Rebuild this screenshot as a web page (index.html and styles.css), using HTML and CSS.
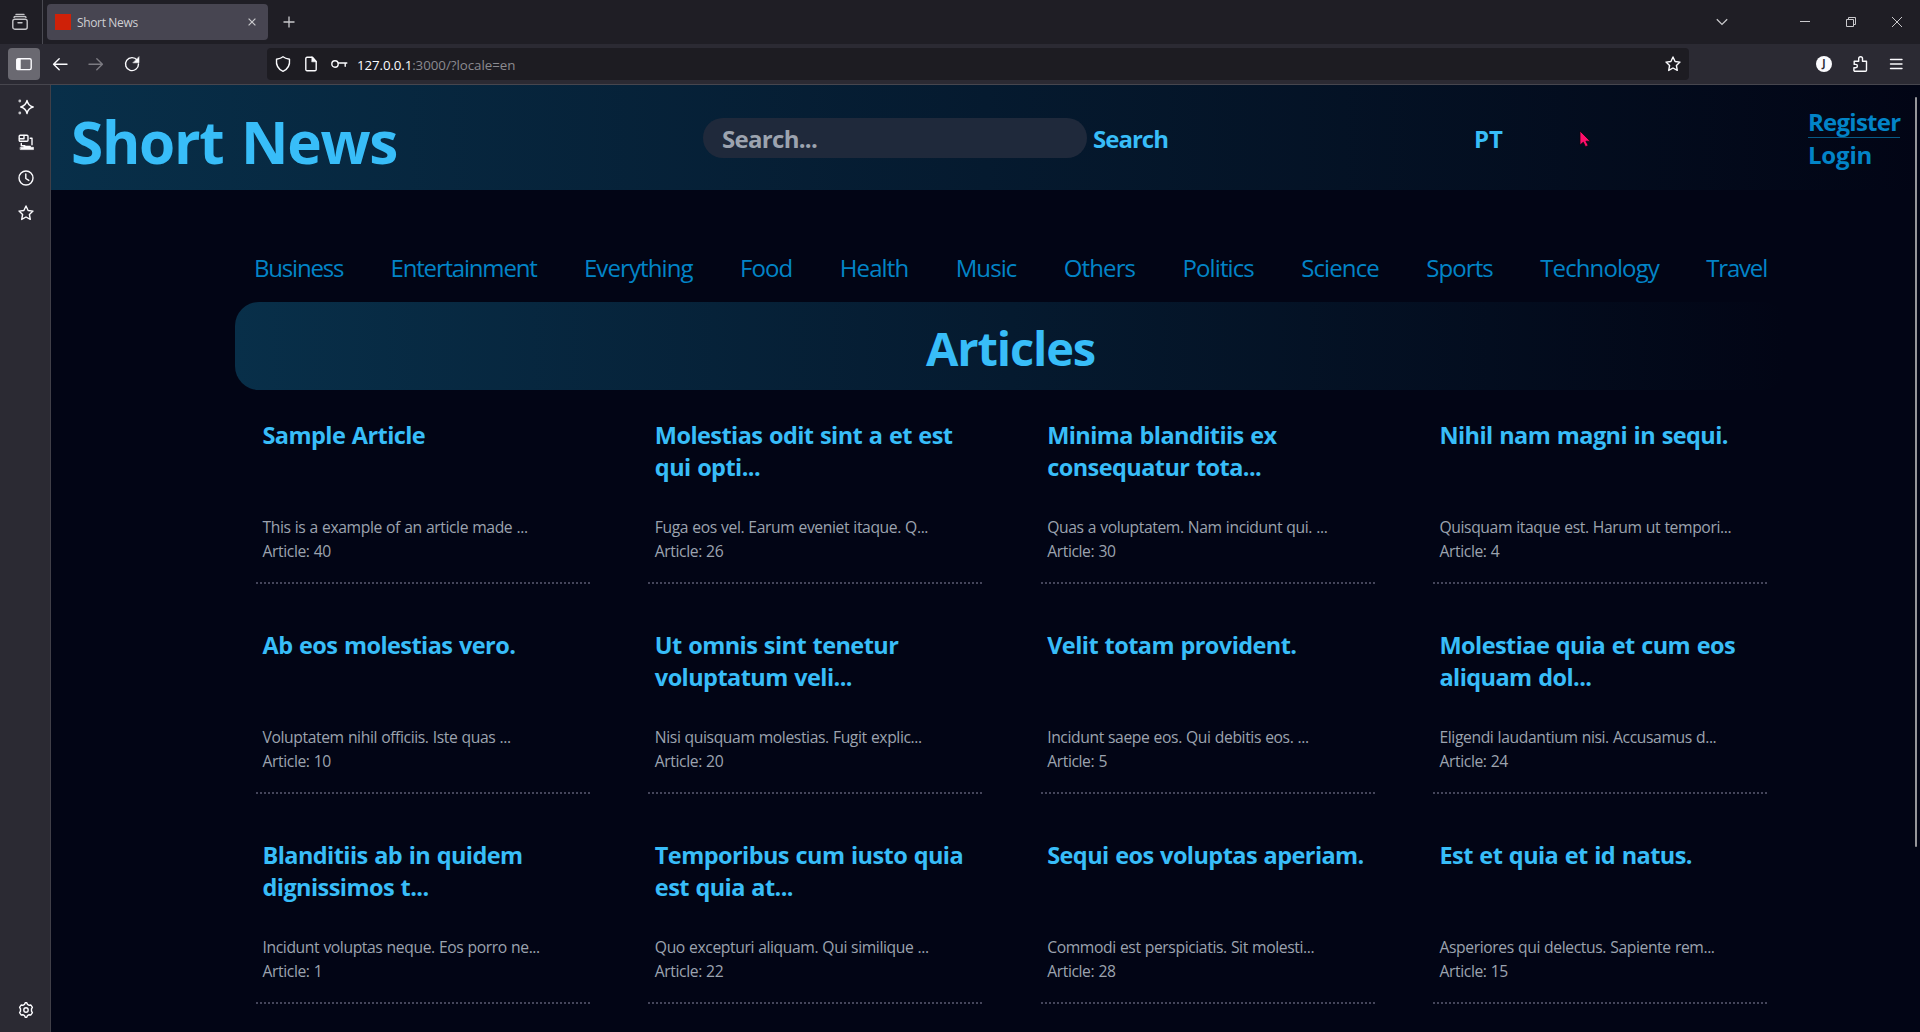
FILE: index.html
```html
<!DOCTYPE html>
<html lang="en">
<head>
<meta charset="utf-8">
<title>Short News</title>
<link rel="stylesheet" href="styles.css">
</head>
<body>
<div class="window">
  <div class="tabbar">
    <div class="view-button">
      <svg class="icon soft" viewBox="0 0 16 16"><rect x=".8" y="5.2" width="14.4" height="10" rx="2"/><path d="M2 3.4C2.3 2.7 3 2.5 3.5 2.5h9c.7 0 1.200.3 1.500.9M4 .4h8M6 8.700h4"/></svg>
    </div>
    <div class="tab">
      <span class="favicon"></span>
      <span class="tab-title">Short News</span>
      <svg class="icon-close" viewBox="0 0 8 8"><path d="M.6.6l6.800 6.800M7.400.6L.6 7.400"/></svg>
    </div>
    <svg class="icon-plus" viewBox="0 0 12 12"><path d="M6 .5v11M.5 6h11"/></svg>
    <div class="window-controls">
      <svg class="icon-chevron" viewBox="0 0 12 8"><path d="M.8 1.200L6 6.400l5.200-5.200"/></svg>
      <svg class="icon-caption" viewBox="0 0 10 10"><path d="M0 4.500h10"/></svg>
      <svg class="icon-caption" viewBox="0 0 10 10"><path d="M.5 2.500h7v7h-7zM2.500 2.500v-2h7v7h-2"/></svg>
      <svg class="icon-caption" viewBox="0 0 10 10"><path d="M0 0l10 10M10 0L0 10"/></svg>
    </div>
  </div>

  <div class="toolbar">
    <div class="sidebar-toggle">
      <svg class="icon" viewBox="0 0 16 16"><rect x=".8" y="2.800" width="14.400" height="10.800" rx="1.500"/><path class="solid" d="M1 3h3.400v10.500H1z"/></svg>
    </div>
    <div class="nav-buttons">
      <svg class="icon" viewBox="0 0 16 16"><path d="M15 8.300H2M7.200 2.800L1.600 8.300l5.600 5.500"/></svg>
      <svg class="icon dim" viewBox="0 0 16 16"><path d="M1 8.300h13M8.800 2.800l5.600 5.500-5.600 5.500"/></svg>
      <svg class="icon" viewBox="0 0 16 16"><path d="M13.200 4.200A6.500 6.500 0 1 0 14.500 8"/><path class="solid" d="M15 1v5.800H9.200z"/></svg>
    </div>
    <div class="urlbar">
      <svg class="icon" viewBox="0 0 16 16"><path d="M8 .8c2 1.600 4.300 2.100 6.500 2.500.5 5-1.600 10-6.500 12C3.100 13.300 1 8.300 1.500 3.300 3.700 2.900 6 2.400 8 .8z"/></svg>
      <svg class="icon" viewBox="0 0 16 16"><path d="M9.500 1.300H4A1.200 1.200 0 0 0 2.800 2.500v11A1.200 1.200 0 0 0 4 14.700h8a1.200 1.200 0 0 0 1.200-1.200V5.500z"/><path class="solid" d="M9 1l4.500 4.800H9z"/></svg>
      <svg class="icon" viewBox="0 0 16 16"><circle cx="4" cy="8" r="3.200"/><path d="M7.200 7h8.600M14.200 7v3.200"/></svg>
      <span class="url"><b>127.0.0.1</b>:3000/?locale=en</span>
      <svg class="icon bookmark" viewBox="0 0 16 16"><path d="M8 1l2.100 4.500 4.900.6-3.600 3.400.9 4.900L8 12l-4.300 2.400.9-4.900L1 6.100l4.900-.6z"/></svg>
    </div>
    <div class="toolbar-end">
      <span class="avatar">J</span>
      <svg class="icon" viewBox="0 0 16 16"><path d="M2.500 15.200h11a1 1 0 0 0 1-1V5.200h-4V2.600a1.900 1.900 0 0 0-3.800 0v2.600H2.200v3.200h1.500a1.700 1.700 0 0 1 0 3.400H1.900v2.700z"/></svg>
      <svg class="icon" viewBox="0 0 16 16"><path d="M2.500 3.500h11.500M2.500 8h11.500M2.500 12.500h11.500"/></svg>
    </div>
  </div>

  <div class="body">
    <aside class="sidebar">
      <svg class="icon" viewBox="0 0 16 16"><path d="M9 1.500C9.800 5.400 11.200 7 15.200 8 11.200 9 9.800 10.600 9 14.500 8.200 10.600 6.500 9 2.700 8 6.500 7 8.200 5.400 9 1.500z"/><circle class="solid thin" cx="1.800" cy="2" r="1.400"/><circle class="solid thin" cx="1.800" cy="14" r="1.400"/></svg>
      <svg class="icon" viewBox="0 0 16 16"><rect x="1.200" y="1.300" width="8.800" height="6" rx="1"/><path d="M6 1.500v3.200H1.500M12.200 4.300h1.800v6.500M3.300 9.500v2.300h3.500"/><path class="solid" d="M2.500 13.300h13v2.300h-13zM6 12h6.500v1.300H6z"/></svg>
      <svg class="icon" viewBox="0 0 16 16"><circle cx="8" cy="8" r="7"/><path d="M7.800 4v4.500l3 1.900"/></svg>
      <svg class="icon" viewBox="0 0 16 16"><path d="M8 1l2.100 4.500 4.900.6-3.600 3.400.9 4.900L8 12l-4.300 2.400.9-4.900L1 6.100l4.900-.6z"/></svg>
      <svg class="icon gear" viewBox="0 0 16 16"><path d="M6.600 2.300L7.200.8h1.600l.6 1.500 1.800 1 1.700-.3 1.500 2.400-.9 1.400v2.400l.9 1.400-1.500 2.400-1.700-.3-1.800 1-.6 1.500H7.200l-.6-1.500-1.800-1-1.700.3-1.500-2.400.9-1.400V6.800l-.9-1.400L3.100 3l1.700.3z"/><circle cx="8" cy="8" r="2.200"/></svg>
    </aside>

    <div class="page">
      <header class="header">
        <h1 class="brand">Short News</h1>
        <form class="search">
          <div class="search-field">Search...</div>
          <span class="search-button">Search</span>
        </form>
        <span class="locale">PT</span>
        <div class="account">
          <a class="account-link underlined">Register</a>
          <a class="account-link">Login</a>
        </div>
      </header>

      <main class="content">
        <nav class="categories">
          <a class="tight">Business</a><a class="tight">Entertainment</a><a>Everything</a><a>Food</a><a>Health</a><a>Music</a><a>Others</a><a>Politics</a><a>Science</a><a>Sports</a><a>Technology</a><a class="tight">Travel</a>
        </nav>
        <h2 class="banner">Articles</h2>
        <section class="grid">
          <article class="card"><h3>Sample Article</h3><p>This is a example of an article made ...</p><p>Article: 40</p></article>
          <article class="card"><h3>Molestias odit sint a et est<br>qui opti...</h3><p>Fuga eos vel. Earum eveniet itaque. Q...</p><p>Article: 26</p></article>
          <article class="card"><h3>Minima blanditiis ex<br>consequatur tota...</h3><p>Quas a voluptatem. Nam incidunt qui. ...</p><p>Article: 30</p></article>
          <article class="card"><h3>Nihil nam magni in sequi.</h3><p>Quisquam itaque est. Harum ut tempori...</p><p>Article: 4</p></article>
          <article class="card"><h3>Ab eos molestias vero.</h3><p>Voluptatem nihil officiis. Iste quas ...</p><p>Article: 10</p></article>
          <article class="card"><h3>Ut omnis sint tenetur<br>voluptatum veli...</h3><p>Nisi quisquam molestias. Fugit explic...</p><p>Article: 20</p></article>
          <article class="card"><h3>Velit totam provident.</h3><p>Incidunt saepe eos. Qui debitis eos. ...</p><p>Article: 5</p></article>
          <article class="card"><h3>Molestiae quia et cum eos<br>aliquam dol...</h3><p>Eligendi laudantium nisi. Accusamus d...</p><p>Article: 24</p></article>
          <article class="card"><h3>Blanditiis ab in quidem<br>dignissimos t...</h3><p>Incidunt voluptas neque. Eos porro ne...</p><p>Article: 1</p></article>
          <article class="card"><h3>Temporibus cum iusto quia<br>est quia at...</h3><p>Quo excepturi aliquam. Qui similique ...</p><p>Article: 22</p></article>
          <article class="card"><h3>Sequi eos voluptas aperiam.</h3><p>Commodi est perspiciatis. Sit molesti...</p><p>Article: 28</p></article>
          <article class="card"><h3>Est et quia et id natus.</h3><p>Asperiores qui delectus. Sapiente rem...</p><p>Article: 15</p></article>
        </section>
      </main>
      <div class="scroll-thumb"></div>
      <svg class="cursor" viewBox="0 0 13 18"><path d="M1 1v14l3.300-2.800 2.200 4.600 2.700-1.300-2.300-4.300h4.300z"/></svg>
    </div>
  </div>
</div>
</body>
</html>
```
FILE: styles.css
```css
* { box-sizing: border-box; }
body { margin: 0; background: #020515; font-family: "Open Sans", "Noto Sans", sans-serif; }
h1, h2, h3, p { margin: 0; }
svg { display: block; fill: none; stroke: #c9c9cc; flex: none; overflow: visible; }

.window { height: 1032px; display: flex; flex-direction: column; overflow: hidden; }

/* Browser tab strip */
.tabbar { flex: none; height: 44px; background: #1f1e25; display: flex; align-items: center; }
.view-button { width: 43px; height: 44px; padding-left: 12px; border-right: 1px solid #4a4a52; display: flex; align-items: center; margin-right: 4px; }
.icon { width: 16px; height: 16px; stroke: #fbfbfe; stroke-width: 1.4; stroke-linejoin: round; stroke-linecap: round; }
.icon.soft { stroke: #c4c4c8; }
.icon.dim { stroke: #7c7b82; }
.icon .solid { fill: #fbfbfe; stroke-width: .6; }
.icon .thin { stroke: none; fill: #c4c4c8; }
.tab { width: 221px; height: 36px; border-radius: 4px; background: #474551; display: flex; align-items: center; padding: 0 12px 0 8px; }
.favicon { width: 16px; height: 16px; background: #cf2108; margin-right: 5px; }
.tab-title { flex: 1; font-size: 12px; letter-spacing: -.35px; color: #cfcfd3; line-height: 16px; padding: 2px 0 0 1px; }
.icon-close { width: 8px; height: 8px; stroke-width: 1.2; }
.icon-plus { width: 12px; height: 12px; margin-left: 15px; stroke-width: 1.3; }
.window-controls { margin-left: auto; display: flex; align-items: center; gap: 36px; padding-right: 18px; }
.icon-chevron { width: 12px; height: 8px; stroke-width: 1.3; margin-right: 36px; }
.icon-caption { width: 10px; height: 10px; stroke-width: 1; }

/* Browser toolbar */
.toolbar { flex: none; height: 41px; background: #2b2a33; border-bottom: 1px solid #47464e; display: flex; align-items: center; padding: 0 16px 0 8px; }
.sidebar-toggle { width: 32px; height: 32px; border-radius: 4px; background: #6a6971; display: grid; place-items: center; }
.nav-buttons { display: flex; gap: 20px; width: 227px; padding-left: 12px; }
.urlbar { width: 1422px; height: 32px; border-radius: 4px; background: #1d1c22; display: flex; align-items: center; gap: 12px; padding: 0 8px; }
.url { font-size: 13.330px; line-height: 20px; letter-spacing: -.05px; color: #8b8a90; margin: 2px 0 0 -2px; }
.url b { font-weight: 400; color: #fbfbfe; letter-spacing: -.12px; }
.bookmark { margin-left: auto; }
.toolbar-end { margin-left: auto; display: flex; gap: 20px; }
.avatar { width: 16px; height: 16px; border-radius: 50%; background: #fbfbfe; color: #2b2a33; font-size: 10px; font-weight: 700; line-height: 15px; text-align: center; }

.body { flex: 1; min-height: 0; display: flex; }
.sidebar { flex: none; width: 51px; background: #2b2a33; border-right: 1px solid #403f47; display: flex; flex-direction: column; gap: 19.400px; padding: 14px 0 14px 18px; }
.gear { margin-top: auto; }

/* News page */
.page { position: relative; flex: 1; min-width: 0; display: flex; flex-direction: column; }
.header { flex: none; height: 105px; padding: 0 0 0 20px; display: grid; grid-template-columns: 632px 770px 335px 1fr; align-items: center; font-size: 24px; font-weight: 700; color: #38bdf8; background: linear-gradient(to right, #082f49, #020515); }
.brand { font-size: 58.500px; line-height: 60px; letter-spacing: -1.330px; word-spacing: 4px; padding-top: 7px; }
.search { display: flex; align-items: center; gap: 6px; line-height: 32px; letter-spacing: -1px; padding-top: 1px; }
.search-field { width: 384px; height: 40px; border-radius: 20px; background: #1f293b; color: #9ca3af; padding: 5px 19px; letter-spacing: -.7px; }
.search-button { padding-top: 1px; }
.locale { line-height: 32px; padding: 3px 0 0 1px; }
.account { display: flex; flex-direction: column; align-items: flex-start; color: #0284c7; padding-top: 2px; }
.account-link { line-height: 33px; letter-spacing: -.75px; }
.account-link:last-child { letter-spacing: -.2px; }
.underlined { line-height: 31px; border-bottom: 1px solid #075985; }

.content { width: 1551px; margin-left: 184px; }
.categories { display: flex; justify-content: space-between; padding: 62px 19px 0 19px; height: 112px; font-size: 24px; line-height: 32px; letter-spacing: -.9px; color: #0284c7; }
.tight { letter-spacing: -1.200px; }
.banner { height: 88px; border-radius: 24px; background: linear-gradient(to right, #082f49, #020515); color: #38bdf8; font-size: 47px; line-height: 93px; letter-spacing: -1.150px; text-align: center; }
.grid { display: grid; grid-template-columns: repeat(4, 334px); justify-content: space-between; row-gap: 45px; padding: 29px 19px 0 21px; }
.card { height: 165px; padding: 0 0 0 6.500px; border-bottom: 2px dotted #44455a; }
.card h3 { height: 96px; font-size: 23.500px; line-height: 32px; letter-spacing: -.57px; word-spacing: 1px; color: #38bdf8; white-space: nowrap; }
.card p { font-size: 15.700px; line-height: 24px; letter-spacing: -.4px; word-spacing: .5px; color: #9ca3af; white-space: nowrap; }

/* Overlays */
.scroll-thumb { position: absolute; right: 3px; top: 12px; width: 2px; height: 750px; background: #96969a; border-radius: 1px; }
.cursor { position: absolute; left: 1528px; top: 45px; width: 13px; height: 18px; }
.cursor path { fill: #ff0f6b; stroke: #10060f; stroke-width: .8; }
```
